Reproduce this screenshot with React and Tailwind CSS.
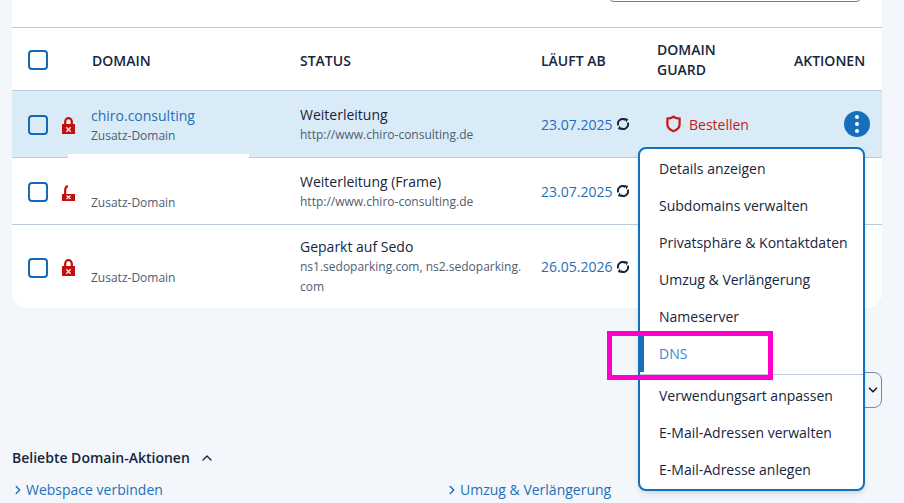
import React from "react";
import { ChevronDown, ChevronRight, ChevronUp } from "lucide-react";

const rows = [
  {
    name: "chiro.consulting",
    status: "Weiterleitung",
    detail: "http://www.chiro-consulting.de",
    date: "23.07.2025",
    lock: "closed",
    height: "h-[67px]",
    active: true,
  },
  {
    name: "",
    status: "Weiterleitung (Frame)",
    detail: "http://www.chiro-consulting.de",
    date: "23.07.2025",
    lock: "open",
    height: "h-[67px]",
  },
  {
    name: "",
    status: "Geparkt auf Sedo",
    detail: "ns1.sedoparking.com, ns2.sedoparking.\u200Bcom",
    date: "26.05.2026",
    lock: "closed",
    height: "h-[83px]",
    last: true,
  },
];

const menuItems = [
  "Details anzeigen",
  "Subdomains verwalten",
  "Privatsphäre & Kontaktdaten",
  "Umzug & Verlängerung",
  "Nameserver",
  "DNS",
  "Verwendungsart anpassen",
  "E-Mail-Adressen verwalten",
  "E-Mail-Adresse anlegen",
];

function Checkbox() {
  return <div className="h-5 w-5 shrink-0 rounded-[4px] border-2 border-[#1568b5] bg-transparent" />;
}

function LockIcon({ open }) {
  return (
    <svg width="13" height="17" viewBox="0 0 13 17" className="shrink-0">
      {open ? (
        <path d="M3.2 11V6C3.2 4 4.200 2.500 6 2" fill="none" stroke="#c40d0d" strokeWidth="2.2" />
      ) : (
        <path d="M3.2 8V4.500a3.300 3.300 0 0 1 6.600 0V8" fill="none" stroke="#c40d0d" strokeWidth="2.2" />
      )}
      <rect x={0} y={open ? 10 : 7} width={13} height={open ? 7 : 10} fill="#c40d0d" />
      <path
        d={open ? "M4.500 11.500l4 3.500M8.500 11.500l-4 3.500" : "M4.300 10.300l4.400 4.400M8.700 10.300l-4.400 4.400"}
        stroke="#f6dede"
        strokeWidth="1.5"
      />
    </svg>
  );
}

function RenewIcon() {
  return (
    <svg width="12" height="12" viewBox="0 0 12 12" fill="none" className="shrink-0">
      <path d="M1.200 7.400A4.800 4.800 0 0 1 8.400 1.800" stroke="#16263d" strokeWidth="2" />
      <path d="M10.800 4.600A4.800 4.800 0 0 1 3.600 10.200" stroke="#16263d" strokeWidth="2" />
      <path d="M7.400 0l3.800 1-1.800 3.600z" fill="#16263d" />
      <path d="M4.600 12L.8 11l1.800-3.600z" fill="#16263d" />
    </svg>
  );
}

function ShieldIcon() {
  return (
    <svg width="15" height="18" viewBox="0 0 16 18" fill="none" className="shrink-0">
      <path
        d="M1.500 3.200C3.800 3.200 6 2.500 8 1.200c2 1.300 4.200 2 6.500 2v6.200c0 3.100-2.600 5.700-6.500 7.300-3.900-1.600-6.500-4.200-6.500-7.300z"
        stroke="#c8181b"
        strokeWidth="2.400"
      />
    </svg>
  );
}

function Row({ row }) {
  return (
    <div
      className={`flex items-center ${row.height} ${row.active ? "bg-[#daebf8]" : "bg-white"} ${
        row.last ? "" : "border-b border-[#bccbd9]"
      }`}
    >
      <div className="mt-[2px] flex w-[79px] items-center pl-4">
        <Checkbox />
        <div className="ml-[14px] flex">
          <LockIcon open={row.lock === "open"} />
        </div>
      </div>
      <div className="w-[209px] self-stretch pt-[14px]">
        <div className="h-[21px] text-[14px] leading-[21px] text-[#1f6fb8]">{row.name}</div>
        <div className={`text-[12px] leading-[20px] text-[#4d5d72] ${row.last ? "mt-[8px]" : ""}`}>Zusatz-Domain</div>
      </div>
      <div className={`w-[241px] self-stretch ${row.last ? "pt-[11px]" : "pt-[13px]"}`}>
        <div className="text-[14px] leading-[21px] text-[#16263d]">{row.status}</div>
        <div className="w-[226px] text-[12px] leading-[20px] text-[#4d5d72]">{row.detail}</div>
      </div>
      <div className="flex w-[116px] items-center gap-[5px] text-[14px] text-[#1f6fb8]">
        {row.date}
        <RenewIcon />
      </div>
      {row.active && (
        <>
          <div className="ml-[9px] flex items-center gap-2 text-[14px] text-[#c8181b]">
            <ShieldIcon />
            Bestellen
          </div>
          <div className="ml-auto mr-3 flex h-[26px] w-[26px] items-center justify-center rounded-full bg-[#1470bd]">
            <div className="flex flex-col gap-[3px]">
              <span className="h-[4px] w-[4px] rounded-full bg-white" />
              <span className="h-[4px] w-[4px] rounded-full bg-white" />
              <span className="h-[4px] w-[4px] rounded-full bg-white" />
            </div>
          </div>
        </>
      )}
    </div>
  );
}

export default function App() {
  return (
    <div className="relative h-[503px] w-[904px] overflow-hidden bg-[#f3f7fb] font-['Open_Sans',sans-serif]">
      <div className="mx-3 w-[870px] overflow-hidden rounded-b-2xl bg-white">
        {/* top bar, cut off by the screenshot */}
        <div className="flex h-[28px] justify-end border-b border-[#bccbd9] pr-5">
          <div className="-mt-8 h-[34px] w-[254px] rounded-md border border-[#6f7f92]" />
        </div>
        {/* table head */}
        <div className="flex h-[63px] items-center border-b border-[#bccbd9] pt-[2px] text-[14px] font-semibold text-[#16263d]">
          <div className="w-[80px] pl-4">
            <Checkbox />
          </div>
          <div className="w-[208px]">DOMAIN</div>
          <div className="w-[241px]">STATUS</div>
          <div className="w-[116px]">LÄUFT AB</div>
          <div className="w-[137px] leading-[20px]">
            DOMAIN
            <br />
            GUARD
          </div>
          <div>AKTIONEN</div>
        </div>
        {rows.map((row, index) => (
          <Row key={index} row={row} />
        ))}
      </div>

      {/* pagination select, mostly behind the menu */}
      <div className="mr-[22px] mt-[64px] flex justify-end">
        <div className="flex h-[36px] w-[60px] items-center justify-end rounded-lg border border-[#6f8aa8] pr-[1px]">
          <ChevronDown size={14} strokeWidth={3} className="text-[#16263d]" />
        </div>
      </div>

      {/* popular actions */}
      <div className="mt-[40px] flex items-center px-3">
        <span className="text-[14px] font-semibold leading-[20px] text-[#16263d]">Beliebte Domain-Aktionen</span>
        <ChevronUp size={16} strokeWidth={2} className="ml-[9px] text-[#16263d]" />
      </div>
      <div className="mt-[12px] flex px-3 text-[14px] leading-[20px] text-[#1f6fb8]">
        <div className="flex w-[434px] items-center">
          <ChevronRight size={14} strokeWidth={2.500} className="-ml-[1px] mr-[1px]" />
          Webspace verbinden
        </div>
        <div className="flex items-center">
          <ChevronRight size={14} strokeWidth={2.500} className="-ml-[1px] mr-[1px]" />
          Umzug & Verlängerung
        </div>
      </div>

      {/* white cover over the hidden domain names */}
      <div className="absolute left-[68px] top-[154px] h-[5px] w-[181px] bg-white" />

      {/* actions menu */}
      <div className="absolute left-[638px] top-[147px] w-[227px] rounded-lg border-2 border-[#1470bd] bg-white pb-[1px] pt-[1px] shadow-md">
        {menuItems.map((item) => (
          <div
            key={item}
            className={`flex items-center text-[14px] ${
              item === "DNS"
                ? "border-l-[4px] border-[#1470bd] pl-[15px] text-[#3f86cf]"
                : "pl-[19px] text-[#16263d]"
            } ${
              item === "Verwendungsart anpassen"
                ? "mt-[2px] h-[40px] border-t border-[#bccbd9] pt-[1px]"
                : "h-[37px]"
            }`}
          >
            {item}
          </div>
        ))}
      </div>

      {/* pink highlight marker */}
      <div className="absolute left-[607px] top-[331px] h-[49px] w-[166px] border-[5px] border-[#ff00cc]" />
    </div>
  );
}
